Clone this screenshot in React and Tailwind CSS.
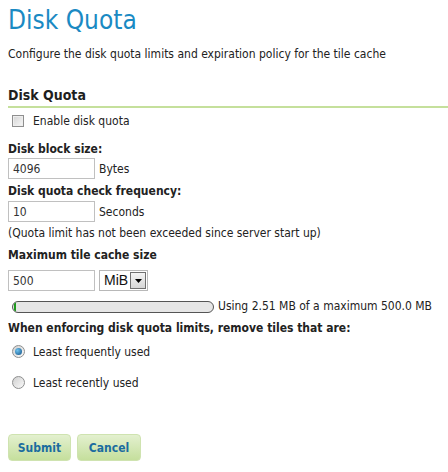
import React from "react";

const font = { fontFamily: "'DejaVu Sans Condensed', 'DejaVu Sans', sans-serif" };

function Checkbox() {
  return (
    <span className="inline-block w-[12px] h-[12px] border border-[#8f8f8f] bg-gradient-to-br from-[#d4d4d4] to-[#f8f8f8] shadow-[inset_0_0_0_1px_#eeeeee]" />
  );
}

function Radio({ checked }) {
  return (
    <span className="inline-flex items-center justify-center w-[13px] h-[13px] rounded-full border border-[#8e8f8f] bg-gradient-to-br from-[#d0d0d0] to-[#fafafa]">
      {checked && (
        <span className="w-[7px] h-[7px] rounded-full bg-[radial-gradient(circle_at_35%_35%,#6ec3f0,#0f4f84)]" />
      )}
    </span>
  );
}

function Input({ value }) {
  return (
    <div className="w-[87px] h-[21px] border border-[#c0c0c0] bg-white flex items-center px-[4px] text-[12px] text-[#333]">
      {value}
    </div>
  );
}

export default function App() {
  return (
    <div style={font} className="w-[448px] h-[472px] bg-white text-[#222] text-[12px] overflow-hidden">
      <div className="pl-[8px] pt-[3px]">
        <h1 className="text-[26px] leading-[34px] text-[#1a8ac3] font-normal">Disk Quota</h1>
        <p className="mt-[9px] leading-[16px] text-[#222]">
          Configure the disk quota limits and expiration policy for the tile cache
        </p>
        <h2 className="mt-[25px] text-[14px] font-bold leading-[17px] text-[#1e1e1e] pb-[2px] border-b-2 border-[#c5e09c]">
          Disk Quota
        </h2>
        <div className="mt-[5px] flex items-center h-[15px]">
          <span className="ml-[4px] flex"><Checkbox /></span>
          <span className="ml-[9px]">Enable disk quota</span>
        </div>
        <div className="mt-[14px] font-bold leading-[15px]">Disk block size:</div>
        <div className="mt-[1px] flex items-center gap-[4px]">
          <Input value="4096" />
          <span>Bytes</span>
        </div>
        <div className="mt-[5px] font-bold leading-[15px]">Disk quota check frequency:</div>
        <div className="mt-[2px] flex items-center gap-[4px]">
          <Input value="10" />
          <span>Seconds</span>
        </div>
        <div className="mt-[4px] leading-[15px]">(Quota limit has not been exceeded since server start up)</div>
        <div className="mt-[7px] font-bold leading-[15px]">Maximum tile cache size</div>
        <div className="mt-[7px] flex items-center gap-[4px]">
          <Input value="500" />
          <div className="w-[49px] h-[21px] border border-[#b8b8b8] flex items-center justify-between pl-[4px] pr-[1px] text-[14px] text-[#111]" style={{ fontFamily: "'Liberation Sans', sans-serif" }}>
            <span>MiB</span>
            <span className="w-[16px] h-[17px] border border-[#707070] bg-gradient-to-b from-[#f4f4f4] to-[#d6d6d6] flex items-center justify-center">
              <svg width="7" height="4" viewBox="0 0 7 4"><path d="M0 0h7L3.5 4z" fill="#000" /></svg>
            </span>
          </div>
        </div>
        <div className="mt-[8px] flex items-center">
          <div className="ml-[4px] w-[202px] h-[12px] rounded-full border border-[#555] bg-[#e6e6e6] overflow-hidden flex">
            <div className="w-[2px] h-full bg-[#1e9a1e] ml-[1px]" />
          </div>
          <span className="ml-[4px] leading-[15px]">Using 2.51 MB of a maximum 500.0 MB</span>
        </div>
        <div className="mt-[7px] font-bold leading-[15px]">When enforcing disk quota limits, remove tiles that are:</div>
        <div className="mt-[8px] flex items-center h-[15px]">
          <span className="ml-[4px] flex"><Radio checked /></span>
          <span className="ml-[8px]">Least frequently used</span>
        </div>
        <div className="mt-[16px] flex items-center h-[15px]">
          <span className="ml-[4px] flex"><Radio /></span>
          <span className="ml-[8px]">Least recently used</span>
        </div>
        <div className="mt-[44px] flex gap-[6px]">
          <button className="w-[63px] h-[27px] rounded-[4px] border border-[#cfe3b0] bg-gradient-to-b from-[#e3f0cf] to-[#c5df9c] text-[#1b6c9f] font-bold text-[12px]">Submit</button>
          <button className="w-[64px] h-[27px] rounded-[4px] border border-[#cfe3b0] bg-gradient-to-b from-[#e3f0cf] to-[#c5df9c] text-[#1b6c9f] font-bold text-[12px]">Cancel</button>
        </div>
      </div>
    </div>
  );
}
